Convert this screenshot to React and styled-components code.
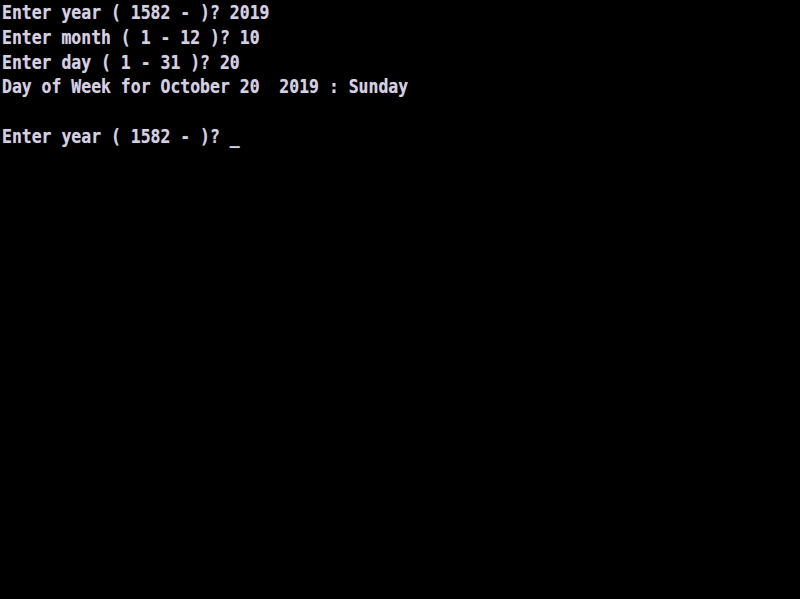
import React from 'react';
import styled, { createGlobalStyle } from 'styled-components';

const GlobalStyle = createGlobalStyle`
  html, body {
    margin: 0;
    padding: 0;
    background: #000;
  }
`;

const Screen = styled.div`
  width: 800px;
  height: 599px;
  background: #000;
  padding: 0 0 0 2px;
  box-sizing: border-box;
  overflow: hidden;
`;

const Line = styled.div`
  height: 24.8px;
  line-height: 24.8px;
  font-family: "DejaVu Sans Mono", "Liberation Mono", monospace;
  font-size: 19px;
  font-weight: bold;
  color: #d4d0e2;
  white-space: pre;
  transform: scaleX(0.866);
  transform-origin: left center;
  text-shadow: 0 0 1px rgba(212, 208, 226, 0.5);
`;

const Cursor = styled.span`
  color: #d4d0e2;
`;

const lines = [
  'Enter year ( 1582 - )? 2019',
  'Enter month ( 1 - 12 )? 10',
  'Enter day ( 1 - 31 )? 20',
  'Day of Week for October 20  2019 : Sunday',
  '',
];

export default function App() {
  return (
    <>
      <GlobalStyle />
      <Screen>
        {lines.map((l, i) => (
          <Line key={i}>{l}</Line>
        ))}
        <Line>
          Enter year ( 1582 - )? <Cursor>_</Cursor>
        </Line>
      </Screen>
    </>
  );
}
